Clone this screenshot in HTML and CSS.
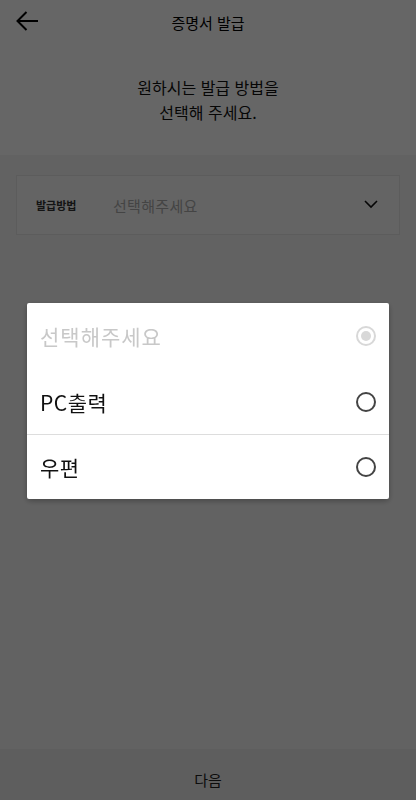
FILE: index.html
```html
<!DOCTYPE html>
<html lang="ko">
<head>
<meta charset="utf-8">
<link rel="stylesheet" href="styles.css">
</head>
<body>
<div class="page">
  <header class="topbar">
    <svg class="back" width="22" height="20" viewBox="0 0 22 20"><path d="M22 10H1.5M10.5 1L1.5 10l9 9" fill="none" stroke="#000" stroke-width="2"/></svg>
    <h1 class="title">증명서 발급</h1>
  </header>
  <section class="intro">
    <p>원하시는 발급 방법을<br>선택해 주세요.</p>
  </section>
  <main class="content">
    <div class="field">
      <span class="label">발급방법</span>
      <span class="value">선택해주세요</span>
      <svg class="chev" width="16" height="10" viewBox="0 0 16 10"><path d="M2 2l6 6 6-6" fill="none" stroke="#111" stroke-width="1.6"/></svg>
    </div>
  </main>
  <footer class="next">다음</footer>
</div>
<div class="dim"></div>
<div class="dialog">
  <div class="opt disabled"><span>선택해주세요</span><i class="radio on"></i></div>
  <div class="opt"><span>PC출력</span><i class="radio"></i></div>
  <div class="opt line"><span>우편</span><i class="radio"></i></div>
</div>
</body>
</html>
```
FILE: styles.css
```css
* { box-sizing: border-box; margin: 0; padding: 0; }
html, body { width: 416px; height: 800px; overflow: hidden; }
body { font-family: "Noto Sans CJK KR", "Noto Sans", sans-serif; color: #111; background: #fff; }
.page { display: flex; flex-direction: column; height: 800px; }
.topbar { height: 44px; display: flex; align-items: center; justify-content: center; position: relative; }
.back { position: absolute; left: 16px; top: 11px; }
.title { font-size: 15px; font-weight: 400; color: #000; }
.intro { height: 111px; display: flex; align-items: flex-start; justify-content: center; text-align: center; padding-top: 31px; background: #fff; }
.intro p { font-size: 16px; line-height: 25px; font-weight: 400; color: #111; }
.content { flex: 1; background: #f6f6f6; padding: 20px 16px; }
.field { height: 60px; border: 1px solid #e6e6e6; background: #fafafa; display: flex; align-items: center; padding: 0 20px 0 19px; }
.label { font-size: 11px; font-weight: 700; color: #333; width: 77px; }
.value { font-size: 15px; color: #aaa; flex: 1; letter-spacing: 0.3px; }
.chev { margin-top: -3px; }
.next { height: 51px; background: #ececec; display: flex; align-items: center; justify-content: center; font-size: 15px; color: #222; padding-top: 9px; }
.dim { position: fixed; inset: 0; background: rgba(0,0,0,0.6); }
.dialog { position: fixed; left: 27px; top: 303px; width: 362px; background: #fff; border-radius: 2px; box-shadow: 0 2px 6px rgba(0,0,0,0.3); }
.opt { height: 65px; display: flex; align-items: center; justify-content: space-between; padding: 0 13px 0 13px; font-size: 21px; color: #111; letter-spacing: 0.5px; }
.opt:first-child { height: 66px; }
.opt.disabled { color: #c8c8c8; letter-spacing: 1px; }
.opt.line { border-top: 1px solid #ddd; }
.radio { width: 20px; height: 20px; border: 2px solid #444; border-radius: 50%; display: block; position: relative; }
.radio.on { border-color: #d8d8d8; }
.radio.on::after { content: ""; position: absolute; left: 3px; top: 3px; width: 10px; height: 10px; border-radius: 50%; background: #d8d8d8; }
```
